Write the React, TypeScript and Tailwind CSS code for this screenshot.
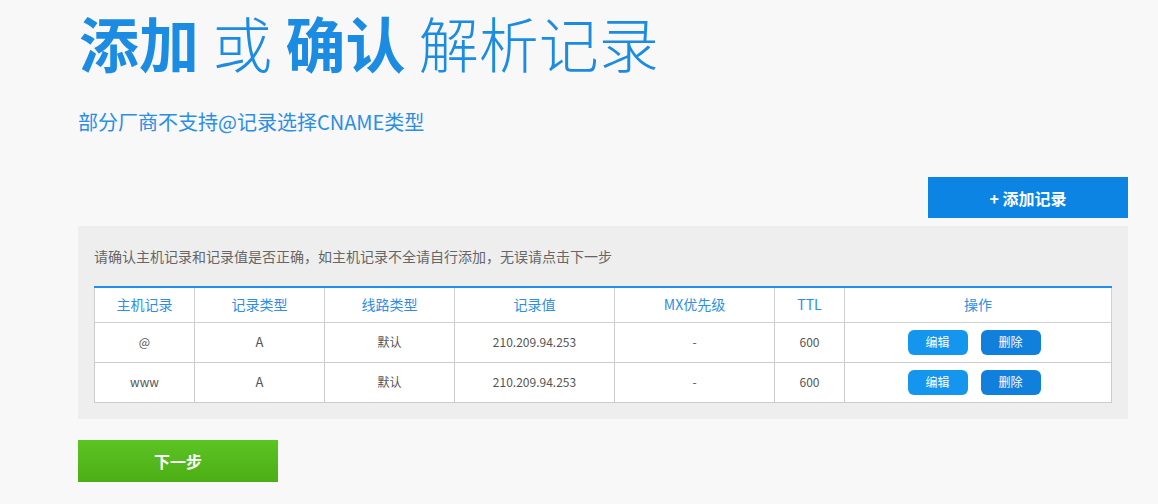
import React from 'react';

const rows = [
  { host: '@', type: 'A', line: '默认', value: '210.209.94.253', mx: '-', ttl: '600' },
  { host: 'www', type: 'A', line: '默认', value: '210.209.94.253', mx: '-', ttl: '600' },
];

const cols = [
  { label: '主机记录', w: 'w-[100px]' },
  { label: '记录类型', w: 'w-[130px]' },
  { label: '线路类型', w: 'w-[130px]' },
  { label: '记录值', w: 'w-[160px]' },
  { label: 'MX优先级', w: 'w-[160px]' },
  { label: 'TTL', w: 'w-[70px]' },
  { label: '操作', w: '' },
];

export default function App() {
  return (
    <div
      className="min-h-[504px] bg-[#f8f8f8] pl-[78px] pr-[30px] pt-[6px]"
      style={{ fontFamily: '"Microsoft YaHei", "Noto Sans CJK SC", "Noto Sans", sans-serif' }}
    >
      {/* Heading */}
      <h1 className="pl-[1px] text-[60px] leading-[72px] text-[#1c8ce3] whitespace-nowrap">
        <span className="font-bold">添加</span>
        <span className="font-light"> 或 </span>
        <span className="font-bold">确认</span>
        <span className="font-light"> 解析记录</span>
      </h1>
      <p className="mt-[32px] text-[20px] leading-6 text-[#2b8ee6]">部分厂商不支持@记录选择CNAME类型</p>

      {/* Add button */}
      <div className="mt-[43px] flex justify-end">
        <button className="w-[200px] h-[41px] bg-[#0b84e3] text-white text-[16px] font-bold">+ 添加记录</button>
      </div>

      {/* Panel */}
      <div className="mt-[8px] bg-[#eeeeee] pt-[20px] pb-[16px] px-[16px]">
        <p className="text-[14px] leading-5 text-[#666]">
          请确认主机记录和记录值是否正确，如主机记录不全请自行添加，无误请点击下一步
        </p>
        <table className="mt-[20px] w-full table-fixed border-collapse bg-white border border-[#cccccc] border-t-2 border-t-[#1e90f0]">
          <thead>
            <tr className="h-[35px]">
              {cols.map((c) => (
                <th key={c.label} className={`${c.w} border border-[#d0d0d0] border-t-0 text-[14px] font-normal text-[#2d8ee6]`}>
                  {c.label}
                </th>
              ))}
            </tr>
          </thead>
          <tbody>
            {rows.map((r) => (
              <tr key={r.host} className="h-[40px] text-[12px] text-[#555]">
                <td className="border border-[#cccccc] text-center">{r.host}</td>
                <td className="border border-[#cccccc] text-center text-[13px]">{r.type}</td>
                <td className="border border-[#cccccc] text-center">{r.line}</td>
                <td className="border border-[#cccccc] text-center">{r.value}</td>
                <td className="border border-[#cccccc] text-center">{r.mx}</td>
                <td className="border border-[#cccccc] text-center">{r.ttl}</td>
                <td className="border border-[#cccccc] text-center pr-[8px]">
                  <div className="flex justify-center gap-[13px]">
                    <button className="w-[60px] h-[25px] rounded-[6px] bg-[#1596ee] text-white text-[12px]">编辑</button>
                    <button className="w-[60px] h-[25px] rounded-[6px] bg-[#117fdc] text-white text-[12px]">删除</button>
                  </div>
                </td>
              </tr>
            ))}
          </tbody>
        </table>
      </div>

      {/* Next */}
      <button className="mt-[21px] w-[200px] h-[42px] bg-gradient-to-b from-[#5cc423] to-[#4cae15] text-white text-[16px] font-bold">
        下一步
      </button>
    </div>
  );
}
